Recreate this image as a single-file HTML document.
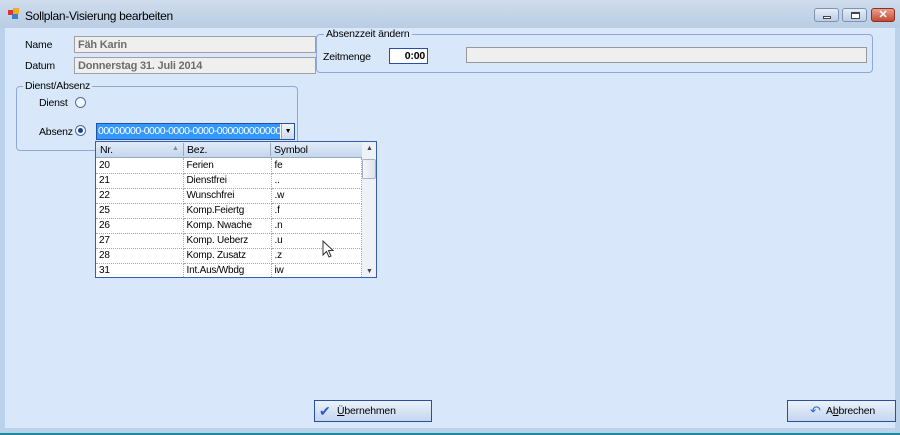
<!DOCTYPE html><html><head><style>
*{box-sizing:border-box;margin:0;padding:0}
body{width:900px;height:435px;overflow:hidden;font-family:"Liberation Sans",sans-serif;font-size:10.5px;letter-spacing:-0.2px;color:#000;background:#bcd2ea;position:relative}
.a{position:absolute}
.title{left:0;top:0;width:900px;height:28px;background:linear-gradient(#cfdcec,#b9cde4)}
.client{left:5px;top:28px;width:890px;height:400px;background:#d8e8fa}
.tb{background:#efefef;border:1px solid #a0a0a0;color:#6d6d6d;font-weight:bold;font-size:11px;padding:2px 3px}
.grp{border:1px solid #8fa8d8;border-radius:4px}
.gt{background:#d8e8fa;padding:0 2px}
.radio{width:11px;height:11px;border:1px solid #4a6fa8;border-radius:50%;background:#f4f8fc}
.wb{height:14px;border:1px solid #7d93b3;border-radius:3px;background:linear-gradient(#e6eef8,#bccde2)}
.btn{height:22px;border:1px solid #2a4fa0;background:linear-gradient(#eaf1fb,#c4d6ee)}
table{border-collapse:collapse;font-size:10px}
td{height:15px;border-bottom:1px dotted #9ab;border-right:1px dotted #9ab;padding:0 3px;white-space:nowrap}
</style></head><body>
<div class="a title"></div>
<div class="a" style="left:8px;top:10px;width:5px;height:5px;background:#d33"></div>
<div class="a" style="left:13px;top:8px;width:6px;height:6px;background:#e9b020"></div>
<div class="a" style="left:12px;top:14px;width:6px;height:5px;background:#3b7fd0"></div>
<div class="a" style="left:25px;top:9px;font-size:12px;letter-spacing:-0.3px">Sollplan-Visierung bearbeiten</div>
<div class="a wb" style="left:814px;top:8px;width:25px"><div class="a" style="left:8px;top:7px;width:8px;height:3px;background:#fff;border:1px solid #445"></div></div>
<div class="a wb" style="left:842px;top:8px;width:25px"><div class="a" style="left:8px;top:3px;width:9px;height:7px;border:1px solid #445;border-top-width:2px;background:#fff"></div></div>
<div class="a" style="left:871px;top:8px;width:24px;height:14px;border:1px solid #8a3020;border-radius:3px;background:linear-gradient(#e8a090,#c44a30);color:#fff;font-weight:bold;text-align:center;font-size:11px;line-height:12px">✕</div>
<div class="a client"></div>
<div class="a" style="left:0;top:433px;width:900px;height:2px;background:#1a8aa0"></div>

<div class="a" style="left:25px;top:39px">Name</div>
<div class="a tb" style="left:74px;top:36px;width:242px;height:17px">Fäh Karin</div>
<div class="a" style="left:25px;top:60px">Datum</div>
<div class="a tb" style="left:74px;top:57px;width:242px;height:17px">Donnerstag 31. Juli 2014</div>

<div class="a grp" style="left:316px;top:34px;width:557px;height:39px"></div>
<div class="a gt" style="left:324px;top:28px">Absenzzeit ändern</div>
<div class="a" style="left:323px;top:51px">Zeitmenge</div>
<div class="a" style="left:389px;top:48px;width:39px;height:16px;border:1px solid #2850a0;background:#fff;font-weight:bold;text-align:right;padding:1px 2px">0:00</div>
<div class="a" style="left:466px;top:47px;width:401px;height:16px;border:1px solid #999;background:#efefef"></div>

<div class="a grp" style="left:16px;top:86px;width:282px;height:65px"></div>
<div class="a gt" style="left:23px;top:80px">Dienst/Absenz</div>
<div class="a" style="left:39px;top:97px">Dienst</div>
<div class="a radio" style="left:75px;top:97px"></div>
<div class="a" style="left:39px;top:126px">Absenz</div>
<div class="a radio" style="left:75px;top:125px"><div class="a" style="left:2px;top:2px;width:5px;height:5px;border-radius:50%;background:#1f3f8a"></div></div>
<div class="a" style="left:96px;top:123px;width:199px;height:17px;border:1px solid #2850a0;background:#fff"></div>
<div class="a" style="left:97px;top:124px;width:183px;height:15px;background:#3399ff;color:#fff;font-size:10.5px;letter-spacing:-0.5px;padding-left:1px;line-height:15px;overflow:hidden;white-space:nowrap">00000000-0000-0000-0000-000000000000</div>
<div class="a" style="left:281px;top:124px;width:13px;height:15px;background:linear-gradient(#f0f4fa,#cfdbeb);border-left:1px solid #9ab;font-size:7px;text-align:center;line-height:15px">▼</div>

<div class="a" style="left:95px;top:141px;width:282px;height:137px;border:1px solid #3a5ab0;background:#fff;overflow:hidden">
<div class="a" style="left:0;top:0;width:266px;height:16px;background:linear-gradient(#e2ecf8,#c4d6ee);border-bottom:1px solid #9ab"></div>
<div class="a" style="left:4px;top:2px">Nr.</div><div class="a" style="left:76px;top:3px;font-size:7px;color:#889">▲</div>
<div class="a" style="left:87px;top:1px;width:1px;height:13px;background:#9ab"></div>
<div class="a" style="left:91px;top:2px">Bez.</div>
<div class="a" style="left:174px;top:1px;width:1px;height:13px;background:#9ab"></div>
<div class="a" style="left:178px;top:2px">Symbol</div>
<table class="a" style="left:0;top:16px;width:266px">
<col style="width:87px"><col style="width:88px"><col>
<tr><td>20</td><td>Ferien</td><td>fe</td></tr>
<tr><td>21</td><td>Dienstfrei</td><td>..</td></tr>
<tr><td>22</td><td>Wunschfrei</td><td>.w</td></tr>
<tr><td>25</td><td>Komp.Feiertg</td><td>.f</td></tr>
<tr><td>26</td><td>Komp. Nwache</td><td>.n</td></tr>
<tr><td>27</td><td>Komp. Ueberz</td><td>.u</td></tr>
<tr><td>28</td><td>Komp. Zusatz</td><td>.z</td></tr>
<tr><td>31</td><td>Int.Aus/Wbdg</td><td>iw</td></tr>
</table>
<div class="a" style="left:266px;top:0;width:15px;height:136px;background:#eef2f7"></div>
<div class="a" style="left:270px;top:3px;font-size:7px;color:#445">▲</div>
<div class="a" style="left:266px;top:17px;width:14px;height:20px;border:1px solid #a8b4c4;border-radius:2px;background:linear-gradient(90deg,#f4f6f9,#dde3ea)"></div>
<div class="a" style="left:270px;top:126px;font-size:7px;color:#445">▼</div>
</div>
<svg class="a" style="left:322px;top:240px" width="14" height="20"><path d="M1 1 L1 15 L4.5 11.5 L7 17 L9 16 L6.5 10.5 L11 10.5 Z" fill="#fff" stroke="#333" stroke-width="1"/></svg>

<div class="a btn" style="left:314px;top:400px;width:118px"><span class="a" style="left:4px;top:2px;color:#2a5ad0;font-size:14px">✔</span><span class="a" style="left:22px;top:4px"><u>Ü</u>bernehmen</span></div>
<div class="a btn" style="left:787px;top:400px;width:109px"><span class="a" style="left:22px;top:2px;color:#2a6ad0;font-size:13px">↶</span><span class="a" style="left:38px;top:4px">A<u>b</u>brechen</span></div>
</body></html>
